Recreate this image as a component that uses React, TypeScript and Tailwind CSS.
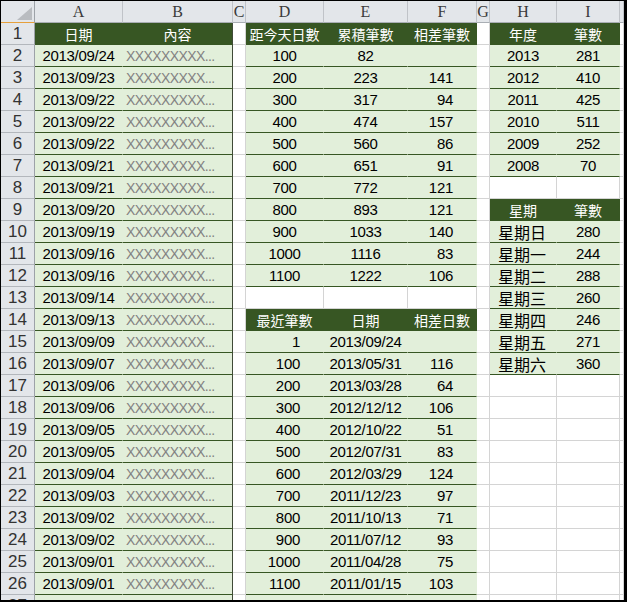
import React from "react";

type Kind = "none" | "data" | "head";
type Align = "c" | "l" | "lx" | "r" | "rf";

interface CellSpec {
  kind: Kind;
  text?: string;
  align?: Align;
  gray?: boolean;
  cjk?: boolean;
  darkRight?: boolean;
}

const colA = [
  "2013/09/24", "2013/09/23", "2013/09/22", "2013/09/22", "2013/09/22", "2013/09/21",
  "2013/09/21", "2013/09/20", "2013/09/19", "2013/09/16", "2013/09/16", "2013/09/14",
  "2013/09/13", "2013/09/09", "2013/09/07", "2013/09/06", "2013/09/06", "2013/09/05",
  "2013/09/05", "2013/09/04", "2013/09/03", "2013/09/02", "2013/09/02", "2013/09/01",
  "2013/09/01", "2013/08/31",
];

const t1: [string, string, string][] = [
  ["100", "82", ""], ["200", "223", "141"], ["300", "317", "94"], ["400", "474", "157"],
  ["500", "560", "86"], ["600", "651", "91"], ["700", "772", "121"], ["800", "893", "121"],
  ["900", "1033", "140"], ["1000", "1116", "83"], ["1100", "1222", "106"],
];

const t2: [string, string, string][] = [
  ["1", "2013/09/24", ""], ["100", "2013/05/31", "116"], ["200", "2013/03/28", "64"],
  ["300", "2012/12/12", "106"], ["400", "2012/10/22", "51"], ["500", "2012/07/31", "83"],
  ["600", "2012/03/29", "124"], ["700", "2011/12/23", "97"], ["800", "2011/10/13", "71"],
  ["900", "2011/07/12", "93"], ["1000", "2011/04/28", "75"], ["1100", "2011/01/15", "103"],
  ["1200", "2010/10/20", "87"],
];

const years: [string, string][] = [
  ["2013", "281"], ["2012", "410"], ["2011", "425"], ["2010", "511"], ["2009", "252"], ["2008", "70"],
];

const week: [string, string][] = [
  ["星期日", "280"], ["星期一", "244"], ["星期二", "288"], ["星期三", "260"],
  ["星期四", "246"], ["星期五", "271"], ["星期六", "360"],
];

function buildRow(r: number): CellSpec[] {
  const cells: CellSpec[] = [];
  if (r === 1) {
    cells.push({ kind: "head", text: "日期", align: "c" });
    cells.push({ kind: "head", text: "內容", align: "c", darkRight: true });
  } else {
    cells.push({ kind: "data", text: colA[r - 2], align: "c" });
    cells.push({ kind: "data", text: "XXXXXXXXX...", align: "lx", gray: true, darkRight: true });
  }
  cells.push({ kind: "none" });
  if (r === 1) {
    cells.push({ kind: "head", text: "距今天日數", align: "c" });
    cells.push({ kind: "head", text: "累積筆數", align: "c" });
    cells.push({ kind: "head", text: "相差筆數", align: "c" });
  } else if (r >= 2 && r <= 12) {
    const d = t1[r - 2];
    cells.push({ kind: "data", text: d[0], align: "c" });
    cells.push({ kind: "data", text: d[1], align: "c" });
    cells.push({ kind: "data", text: d[2], align: "rf" });
  } else if (r === 13) {
    cells.push({ kind: "none" }, { kind: "none" }, { kind: "none" });
  } else if (r === 14) {
    cells.push({ kind: "head", text: "最近筆數", align: "c" });
    cells.push({ kind: "head", text: "日期", align: "c" });
    cells.push({ kind: "head", text: "相差日數", align: "c" });
  } else {
    const d = t2[r - 15];
    cells.push({ kind: "data", text: d[0], align: "r" });
    cells.push({ kind: "data", text: d[1], align: "c" });
    cells.push({ kind: "data", text: d[2], align: "rf" });
  }
  cells.push({ kind: "none" });
  if (r === 1) {
    cells.push({ kind: "head", text: "年度", align: "c" });
    cells.push({ kind: "head", text: "筆數", align: "c" });
  } else if (r >= 2 && r <= 7) {
    const d = years[r - 2];
    cells.push({ kind: "data", text: d[0], align: "c" });
    cells.push({ kind: "data", text: d[1], align: "c" });
  } else if (r === 9) {
    cells.push({ kind: "head", text: "星期", align: "c" });
    cells.push({ kind: "head", text: "筆數", align: "c" });
  } else if (r >= 10 && r <= 16) {
    const d = week[r - 10];
    cells.push({ kind: "data", text: d[0], align: "l", cjk: true });
    cells.push({ kind: "data", text: d[1], align: "c" });
  } else {
    cells.push({ kind: "none" }, { kind: "none" });
  }
  cells.push({ kind: "none" });
  return cells;
}

const alignCls: Record<Align, string> = {
  c: "justify-center",
  l: "justify-start pl-[8px]",
  lx: "justify-start pl-[3px]",
  r: "justify-end pr-[23px]",
  rf: "justify-end pr-[23px]",
};

function Cell({ spec }: { spec: CellSpec }) {
  let base = "";
  if (spec.kind === "none") {
    base = "bg-white border-r border-b border-r-[#d4d4d4] border-b-[#d4d4d4]";
  } else if (spec.kind === "data") {
    base = spec.darkRight
      ? "bg-[#e2efda] border-r border-b border-r-[#3f4a37] border-b-[#375623]"
      : "bg-[#e2efda] border-r border-b border-r-[#e2efda] border-b-[#375623]";
  } else {
    base = spec.darkRight
      ? "bg-[#375623] border-r border-b border-r-[#3f4a37] border-b-[#375623]"
      : "bg-[#375623] border-r border-b border-r-[#375623] border-b-[#375623]";
  }
  let textCls = "";
  if (spec.kind === "head") {
    textCls = "text-white text-[14px] font-['Noto_Sans_CJK_TC',sans-serif]";
  } else if (spec.cjk) {
    textCls = "text-black text-[16px] font-['Noto_Sans_CJK_TC',sans-serif]";
  } else if (spec.gray) {
    textCls = "text-[#828282] text-[14px] tracking-[-0.6px] font-['Liberation_Sans',sans-serif]";
  } else {
    textCls = "text-black text-[15px] tracking-[-0.3px] font-['Liberation_Sans',sans-serif]";
  }
  const al = spec.align ? alignCls[spec.align] : "";
  return (
    <div className={`${base} flex items-center overflow-hidden whitespace-nowrap leading-none ${al} ${textCls}`}>
      {spec.text}
    </div>
  );
}

const letters = ["A", "B", "C", "D", "E", "F", "G", "H", "I", ""];

export default function App() {
  const rows = Array.from({ length: 27 }, (_, i) => i + 1);
  return (
    <div className="w-[627px] h-[602px] bg-white">
      <div className="w-[627px] h-[602px] border-l border-t border-r-[3px] border-b-[2px] border-black overflow-hidden">
        <div className="grid grid-cols-[34px_88px_110px_13px_78px_84px_69px_13px_67px_63px_1fr] auto-rows-[22px]">
          <div className="bg-[#e3e6ea] border-r border-b border-r-[#9da2a8] border-b-[#e6a03c] relative">
            <svg className="absolute left-[16px] top-[6px]" width="15" height="13" viewBox="0 0 15 13">
              <polygon points="15,0 15,13 0,13" fill="#b9bcc0" />
            </svg>
          </div>
          {letters.map((l, i) => (
            <div
              key={"h" + i}
              className="bg-[#e3e6ea] border-r border-b border-r-[#c0c3c8] border-b-[#a9aeb4] flex items-center justify-center text-[16px] leading-none text-[#3a3a3a] font-['Liberation_Serif',serif]"
            >
              {l}
            </div>
          ))}
          {rows.map((r) => (
            <React.Fragment key={r}>
              <div className="bg-[#e3e6ea] border-r border-b border-r-[#9da2a8] border-b-[#b3b7bc] flex items-center justify-center text-[17px] leading-none text-[#333] font-['Liberation_Sans',sans-serif]">
                {r}
              </div>
              {buildRow(r).map((c, ci) => (
                <Cell key={ci} spec={c} />
              ))}
            </React.Fragment>
          ))}
        </div>
      </div>
    </div>
  );
}
